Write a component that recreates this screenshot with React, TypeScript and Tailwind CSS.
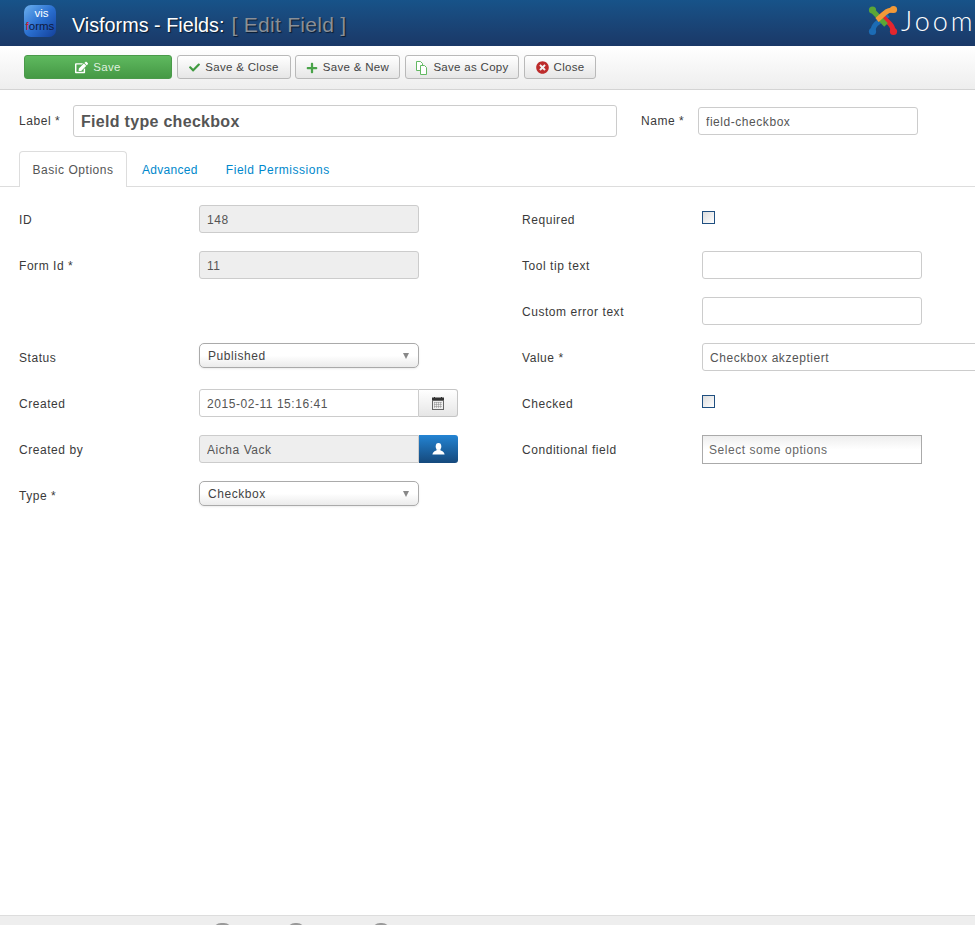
import { FaCheck, FaPlus, FaTimesCircle, FaEdit } from "react-icons/fa";
import type { ReactNode } from "react";

const text12 = "text-[12px] tracking-[0.55px]";
const textBar = "text-[11.5px] tracking-[0.3px]";

function VisLogo() {
  return (
    <div className="mb-[5px] flex h-[32px] w-[32px] shrink-0 flex-col items-center rounded-[7px] bg-gradient-to-br from-[#6cb0ee] via-[#2a6fd0] to-[#14409a] pt-[2px] leading-none">
      <span className="pl-[3px] text-[11.5px] leading-[13px] text-white">vis</span>
      <span className="text-[11.5px] leading-[13px] text-[#10193f]">
        <span className="text-[#d0141c]">f</span>orms
      </span>
    </div>
  );
}

function JoomlaMark() {
  return (
    <svg width="30" height="31" viewBox="0 0 30 31" className="mb-[6px] shrink-0">
      <g fill="none" strokeWidth="5">
        <path d="M5 26 Q5 22 8 19 L20 10" stroke="#1c6cb5" />
        <circle cx="4.5" cy="26.5" r="3.6" fill="#1c6cb5" />
        <path d="M25 26 Q25 22 22 19 L12 9" stroke="#e2262e" />
        <circle cx="25.5" cy="26.5" r="3.6" fill="#e2262e" />
        <path d="M5 6 L18 20" stroke="#5ba637" />
        <circle cx="4.5" cy="5" r="3.6" fill="#5ba637" />
        <path d="M25 5 Q20 5 17 8 L9 15" stroke="#f29a38" />
        <circle cx="25.5" cy="4.5" r="3.6" fill="#f29a38" />
      </g>
    </svg>
  );
}

function CopyIcon() {
  return (
    <svg width="13" height="14" viewBox="0 0 13 14" fill="none" stroke="#63b863" strokeWidth="1">
      <path d="M1.5 .5h4l2 2v7h-6z" fill="#fff" />
      <path d="M5.5 4.5h4l2 2v7h-6z" fill="#fff" />
    </svg>
  );
}

function CalendarIcon() {
  return (
    <svg width="12" height="13" viewBox="0 0 12 13">
      <rect x="0" y="0.5" width="12" height="3" fill="#333" />
      <rect x="2" y="0" width="1" height="2" fill="#333" />
      <rect x="9" y="0" width="1" height="2" fill="#333" />
      <rect x="0.5" y="3.5" width="11" height="9" fill="#eee" stroke="#666" />
      <path d="M2 6h8M2 8h8M2 10h8M3 5v6M5 5v6M7 5v6M9 5v6" stroke="#777" strokeWidth="0.8" strokeDasharray="1 1" fill="none" />
    </svg>
  );
}

function UserIcon() {
  return (
    <svg width="13" height="12" viewBox="0 0 13 12" fill="#fff">
      <ellipse cx="6.5" cy="3.4" rx="2.8" ry="3.4" />
      <path d="M4.6 6.2 L8.4 6.2 L8.6 7.6 Q12 8.6 12.6 11.5 L0.4 11.5 Q1 8.6 4.4 7.6z" />
    </svg>
  );
}

function ToolButton({ icon, label, className }: { icon: ReactNode; label: string; className: string }) {
  return (
    <button
      type="button"
      className={`flex h-[24px] items-center justify-center gap-[5px] rounded-[3px] border border-[#b9b9b9] bg-gradient-to-b from-white to-[#e6e6e6] pt-[2px] text-[#444] ${textBar} ${className}`}
    >
      {icon}
      {label}
    </button>
  );
}

function Field({ label, children }: { label: string; children?: ReactNode }) {
  return (
    <div className="flex h-[28px] items-center">
      <label className={`w-[180px] shrink-0 pt-[1px] text-[#3a3a3a] ${text12}`}>{label}</label>
      {children}
    </div>
  );
}

function TextBox({ value = "", disabled = false, className = "" }: { value?: string; disabled?: boolean; className?: string }) {
  return (
    <input
      readOnly
      value={value}
      className={`h-[28px] rounded-[3px] border border-[#ccc] px-[7px] pt-[1px] text-[#555] outline-none ${text12} ${disabled ? "bg-[#eee]" : "bg-white"} ${className}`}
    />
  );
}

function Select({ value }: { value: string }) {
  return (
    <div
      className={`mb-[3px] flex h-[25px] w-[220px] items-center justify-between rounded-[5px] border border-[#aaa] bg-gradient-to-b from-white via-white to-[#ebebeb] pl-[8px] pr-[9px] pt-[1px] text-[#444] shadow-[0_1px_2px_rgba(0,0,0,0.08)] ${text12}`}
    >
      {value}
      <span className="h-0 w-0 border-x-[3.5px] border-t-[6px] border-x-transparent border-t-[#888]" />
    </div>
  );
}

function Checkbox() {
  return <div className="mb-[4px] h-[13px] w-[13px] border border-[#1f4f80] bg-gradient-to-br from-[#ddd] to-white" />;
}

export default function App() {
  return (
    <div className="flex h-[925px] flex-col overflow-hidden bg-white font-['Liberation_Sans',Arial,sans-serif]">
      {/* Header */}
      <header className="flex h-[46px] shrink-0 items-center overflow-hidden bg-gradient-to-b from-[#175389] to-[#1a3867] pl-[24px]">
        <VisLogo />
        <h1 className="ml-[16px] whitespace-nowrap pt-[3px] text-[19.8px] text-white [text-shadow:1px_1px_1px_rgba(0,0,0,0.6)]">
          Visforms - Fields:
          <span className="ml-[7px] text-[21px] tracking-[0.3px] text-[#8b9097]">[ Edit Field ]</span>
        </h1>
        <div className="ml-auto flex w-[107px] shrink-0 items-center gap-[3px]">
          <JoomlaMark />
          <span className="mb-[6px] font-['Lato',sans-serif] text-[27px] font-light leading-none tracking-[3px] text-white">Joom</span>
        </div>
      </header>

      {/* Toolbar */}
      <div className="flex h-[44px] shrink-0 items-center gap-[4px] border-b border-[#d4d4d4] bg-gradient-to-b from-white to-[#eee] pb-[2px] pl-[24px]">
        <button
          type="button"
          className={`mr-[1px] flex h-[24px] w-[148px] items-center justify-center gap-[5px] rounded-[3px] border border-[#4a9a4a] bg-gradient-to-b from-[#5fb95f] to-[#459945] pt-[2px] text-[#dff0df] ${textBar}`}
        >
          <FaEdit className="text-[13px] text-white" />
          Save
        </button>
        <ToolButton className="w-[114px]" icon={<FaCheck className="text-[11px] text-[#3f9a3f]" />} label="Save & Close" />
        <ToolButton className="w-[105px]" icon={<FaPlus className="text-[12px] text-[#49a349]" />} label="Save & New" />
        <ToolButton className="ml-[1px] w-[114px]" icon={<CopyIcon />} label="Save as Copy" />
        <ToolButton className="ml-[1px] w-[72px]" icon={<FaTimesCircle className="text-[13px] text-[#bd2c2c]" />} label="Close" />
      </div>

      {/* Label and name */}
      <div className="flex shrink-0 items-center pl-[19px] pt-[15px]">
        <label className={`w-[54px] shrink-0 text-[#3a3a3a] ${text12}`}>Label *</label>
        <input
          readOnly
          value="Field type checkbox"
          className="h-[32px] w-[544px] rounded-[3px] border border-[#ccc] px-[7px] pt-[1px] text-[16px] font-bold tracking-[0.3px] text-[#555] outline-none"
        />
        <label className={`ml-[24px] w-[57px] shrink-0 text-[#3a3a3a] ${text12}`}>Name *</label>
        <TextBox value="field-checkbox" className="w-[220px]" />
      </div>

      {/* Tabs */}
      <div className={`mt-[14px] flex h-[36px] shrink-0 border-b border-[#ddd] pl-[19px] ${text12}`}>
        <div className="flex h-[36px] w-[108px] items-center justify-center rounded-t-[4px] border border-b-0 border-[#ddd] bg-white text-[#555]">
          Basic Options
        </div>
        <div className="ml-[15px] flex h-[36px] items-center pt-[1px] tracking-[0.3px] text-[#0088cc]">Advanced</div>
        <div className="ml-[28px] flex h-[36px] items-center pt-[1px] text-[#0088cc]">Field Permissions</div>
      </div>

      {/* Form */}
      <main className="flex flex-1 pl-[19px] pt-[18px]">
        <div className="flex w-[503px] shrink-0 flex-col gap-[18px]">
          <Field label="ID">
            <TextBox value="148" disabled className="w-[220px]" />
          </Field>
          <Field label="Form Id *">
            <TextBox value="11" disabled className="w-[220px]" />
          </Field>
          <Field label="" />
          <Field label="Status">
            <Select value="Published" />
          </Field>
          <Field label="Created">
            <div className="flex">
              <TextBox value="2015-02-11 15:16:41" className="w-[220px] rounded-r-none px-[6px]" />
              <div className="flex h-[28px] w-[39px] items-center justify-center rounded-r-[3px] border border-l-0 border-[#c5c5c5] bg-gradient-to-b from-white to-[#e6e6e6]">
                <CalendarIcon />
              </div>
            </div>
          </Field>
          <Field label="Created by">
            <div className="flex">
              <TextBox value="Aicha Vack" disabled className="w-[220px] rounded-r-none" />
              <div className="flex h-[28px] w-[39px] items-center justify-center rounded-r-[3px] bg-gradient-to-b from-[#2384d3] to-[#15497c]">
                <UserIcon />
              </div>
            </div>
          </Field>
          <Field label="Type *">
            <Select value="Checkbox" />
          </Field>
        </div>
        <div className="flex flex-1 flex-col gap-[18px]">
          <Field label="Required">
            <Checkbox />
          </Field>
          <Field label="Tool tip text">
            <TextBox className="w-[220px]" />
          </Field>
          <Field label="Custom error text">
            <TextBox className="w-[220px]" />
          </Field>
          <Field label="Value *">
            <TextBox value="Checkbox akzeptiert" className="w-[320px] shrink-0" />
          </Field>
          <Field label="Checked">
            <Checkbox />
          </Field>
          <Field label="Conditional field">
            <div className={`flex h-[29px] w-[220px] items-center border border-[#aaa] bg-gradient-to-b from-[#eee] via-white to-white px-[6px] pt-[1px] text-[#666] ${text12}`}>
              Select some options
            </div>
          </Field>
        </div>
      </main>

      {/* Footer, cut off by the window */}
      <footer className="flex h-[10px] shrink-0 items-start border-t border-[#ddd] bg-[#eee] pl-[213px] pt-[7px]">
        <span className="h-[18px] w-[19px] shrink-0 rounded-[8px] bg-[#999]" />
        <span className="ml-[55px] h-[18px] w-[18px] shrink-0 rounded-[8px] bg-[#999]" />
        <span className="ml-[67px] h-[18px] w-[18px] shrink-0 rounded-[8px] bg-[#999]" />
      </footer>
    </div>
  );
}
